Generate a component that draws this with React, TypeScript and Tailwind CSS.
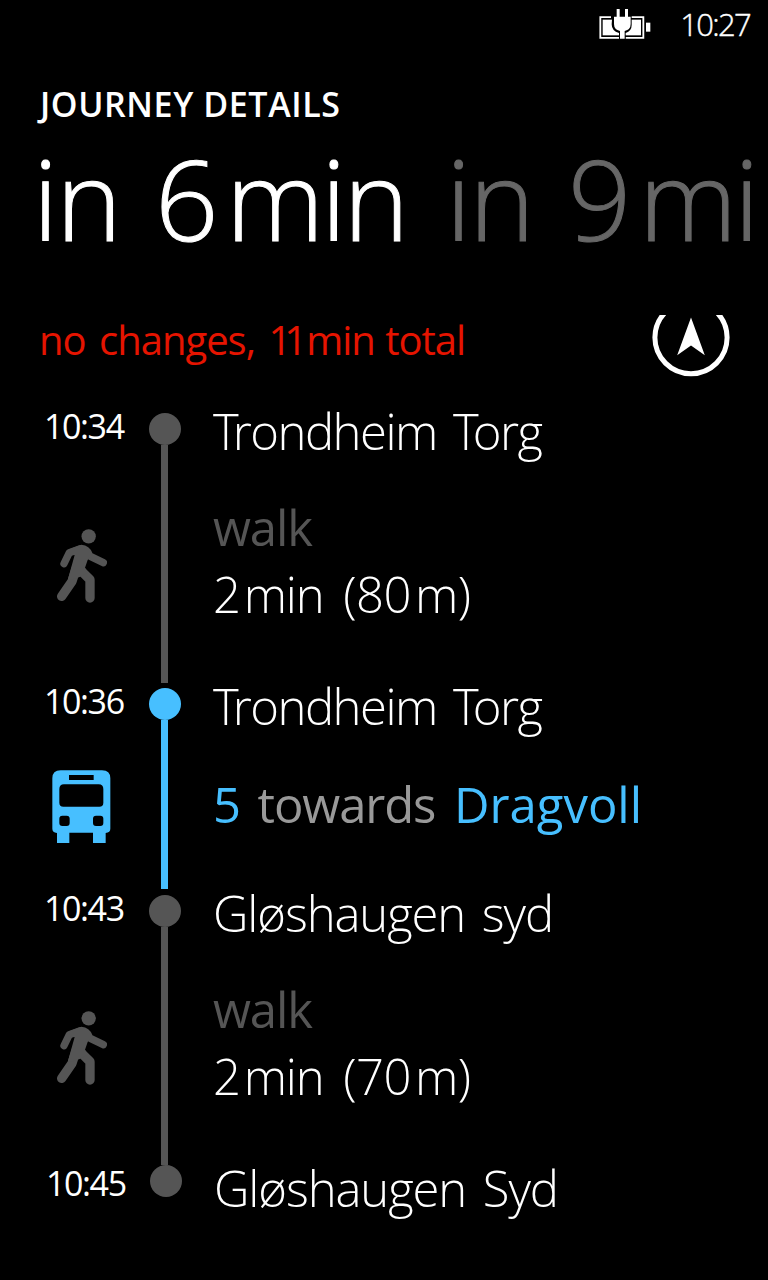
import type { ReactNode } from "react";

function BatteryIcon() {
  return (
    <svg className="h-[32px] w-[52px]" viewBox="56 26 156 96">
      <path d="M60 50.500H92M148 50.500H189V112.500H135M118 112.500H60V48" fill="none" stroke="#fff" strokeWidth="5.500" />
      <rect x="67" y="58" width="115" height="47" fill="#fff" />
      <rect x="197" y="67" width="13" height="27" fill="#fff" />
      <path
        d="M96 44H154V74Q154 92 136 98V120H116V98Q94 92 94 72Z"
        fill="#000"
      />
      <path
        d="M109 26h9v23h16v-23h9v23h8v22q0 17-18 21v23h-14v-23q-18-4-18-21v-22h8z"
        fill="#fff"
      />
    </svg>
  );
}

function CompassIcon() {
  return (
    <svg className="block h-[62px] w-[78px]" viewBox="0 0 78 62" fill="none">
      <circle cx="39" cy="22.600" r="36.100" stroke="#fff" strokeWidth="5" />
      <path d="M39 2.500L52.800 40.300L39 30.500L25.200 40.300Z" fill="#fff" />
    </svg>
  );
}

function WalkIcon() {
  return (
    <svg className="block h-[74px] w-[50px]" viewBox="80 88 150 222" fill="#555" stroke="#555" strokeLinecap="round" strokeLinejoin="round">
      <circle cx="175" cy="110" r="21.500" stroke="none" />
      <path d="M101 192L117 159L150 147" fill="none" strokeWidth="22" />
      <path d="M166 154L180 170L219 189" fill="none" strokeWidth="22" />
      <path d="M94 290L125 245L138 205" fill="none" strokeWidth="28" />
      <path d="M150 211L179 240V295" fill="none" strokeWidth="28" />
      <path d="M117 149L153 135Q178 137 186 160L172 181L164 204L173 218L148 232L122 240L113 238L133 166L120 168Z" stroke="none" />
    </svg>
  );
}

function BusIcon() {
  return (
    <svg className="block h-[73px] w-[59px]" viewBox="67 90 177 219" fill="#47bfff">
      <path
        fillRule="evenodd"
        d="M93 91H217Q242 91 242 115V266Q242 277 228 279V309H190V278H119V309H82V279Q68 277 68 266V115Q68 91 93 91ZM118 105V120H192V105ZM103 133Q89 133 89 147V188Q89 200 101 200H209Q221 200 221 188V147Q221 133 207 133ZM98 227Q89 227 89 236V249Q89 258 98 258H111Q120 258 120 249V236Q120 227 111 227ZM199 227Q190 227 190 236V249Q190 258 199 258H212Q221 258 221 249V236Q221 227 212 227Z"
      />
    </svg>
  );
}

type StopProps = {
  time: string;
  place: ReactNode;
  height: string;
  blue?: boolean;
  icon?: ReactNode;
  iconGap?: string;
  line?: string;
  children?: ReactNode;
};

function Stop({ time, place, height, blue, icon, iconGap = "", line, children }: StopProps) {
  const color = blue ? "bg-[#47bfff]" : "bg-[#555]";
  const timeOffset = line ? "pt-px pl-[44px]" : "pt-[6px] pl-[46px]";
  const placeOffset = line ? "pt-px" : "pt-[6px]";
  return (
    <section className={`flex ${height}`}>
      <div className="w-[149px] shrink-0">
        <div className={`text-[34px] leading-[24px] tracking-[-1.4px] whitespace-nowrap ${timeOffset}`}>{time}</div>
        {icon && <div className={iconGap}>{icon}</div>}
      </div>
      <div className={`flex w-8 shrink-0 flex-col items-center ${line ? "" : "ml-px"}`}>
        <div className={`size-8 shrink-0 rounded-full ${color}`} />
        {line && <div className={`mr-px w-[7px] ${line} ${color}`} />}
      </div>
      <div className="pl-[32px] text-[49px] leading-[66px] font-light tracking-[-1.1px] whitespace-nowrap [word-spacing:5px]">
        <div className={`leading-[34px] ${placeOffset}`}>{place}</div>
        {children}
      </div>
    </section>
  );
}

function TrondheimTorg() {
  return (
    <span className="tracking-[-1.5px]">
      <span className="tracking-[-6px]">T</span>rondheim <span className="tracking-[-6px]">T</span>org
    </span>
  );
}

function WalkLeg({ distance }: { distance: string }) {
  return (
    <>
      <div className="mt-[46px] font-normal text-[#555]">walk</div>
      <div className="mt-px">
        2&#8202;min <span className="pl-[3px] tracking-[-0.6px]">({distance}&#8202;m)</span>
      </div>
    </>
  );
}

export default function App() {
  return (
    <main className="h-[1280px] w-[768px] overflow-hidden bg-black font-['Open_Sans','Noto_Sans',sans-serif] text-white">
      <div className="flex h-[50px] items-start justify-end pt-[9px] pr-[18px]">
        <BatteryIcon />
        <div className="ml-[29px] text-[31px] leading-[30px] font-light tracking-[-1.7px] [-webkit-text-stroke:0.4px_white]">10:27</div>
      </div>
      <h1 className="mt-[34px] ml-[40px] text-[34px] leading-[40px] font-semibold tracking-[0.6px] whitespace-nowrap">JOURNEY DETAILS</h1>
      <div className="mt-[-2px] ml-[33px] flex h-[152px] w-[720px] overflow-hidden text-[111px] leading-[152px] font-light tracking-[-1.8px] whitespace-nowrap [word-spacing:8px] [-webkit-text-stroke:1px_currentColor]">
        <div className="w-[413px] shrink-0">
          in 6&#8202;<span className="tracking-[-2.8px]">min</span>
        </div>
        <div className="text-[#666]">
          in 9&#8202;<span className="tracking-[-2.8px]">min</span>
        </div>
      </div>
      <div className="mt-[41px] flex h-[62px]">
        <div className="w-[614px] pl-[39px] text-[40px] leading-[50px] tracking-[-1px] whitespace-nowrap text-[#e51400] [word-spacing:1px]">
          <span className="[word-spacing:4px]">no changes, </span>
          <span className="tracking-[-7px]">1</span>
          <span className="tracking-[-4px]">1</span>&#8202;min total
        </div>
        <div className="ml-[38px]"><CompassIcon /></div>
      </div>
      <div className="mt-[36px]">
        <Stop time="10:34" place={<TrondheimTorg />} height="h-[275px]" line="h-[238px]" icon={<WalkIcon />} iconGap="mt-[91px] ml-[57px]">
          <WalkLeg distance="80" />
        </Stop>
        <Stop time="10:36" place={<TrondheimTorg />} height="h-[207px]" line="h-[169px]" blue icon={<BusIcon />} iconGap="mt-[57px] ml-[52px]">
          <div className="mt-[48px] font-normal text-[#999]">
            <span className="text-[#47bfff]">5</span> <span className="pl-px">towards</span>{" "}
            <span className="pl-[2px] tracking-[0px] text-[#47bfff]">Dragvoll</span>
          </div>
        </Stop>
        <Stop time="10:43" place="Gløshaugen syd" height="h-[270px]" line="h-[238px]" icon={<WalkIcon />} iconGap="mt-[91px] ml-[57px]">
          <WalkLeg distance="70" />
        </Stop>
        <Stop time="10:45" place="Gløshaugen Syd" height="h-[60px]" />
      </div>
    </main>
  );
}
